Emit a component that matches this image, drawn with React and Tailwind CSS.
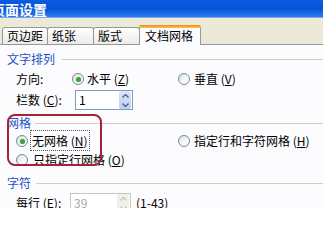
import React from "react";

const font = { fontFamily: '"Noto Sans CJK SC", "Liberation Sans", sans-serif' };

function Radio({ checked }) {
  return (
    <span className="relative inline-flex w-[12px] h-[12px] shrink-0 rounded-full border border-[#6F8AA6] bg-gradient-to-br from-[#D9DDE0] via-[#F4F5F5] to-white items-center justify-center">
      {checked && <span className="w-[5px] h-[5px] rounded-full bg-[#3DA33D] shadow-[0_0_1px_#7fd07f]" />}
    </span>
  );
}

function M({ children }) {
  return <span className="underline underline-offset-[1px]">{children}</span>;
}

function Spinner({ disabled }) {
  const c = disabled ? "#C9C7BA" : "#4D6185";
  return (
    <div className={`flex flex-col w-[12px] h-[18px] mr-[1px] ${disabled ? "bg-[#F0EFEA]" : "bg-gradient-to-b from-[#DCE6FB] to-[#B9CCF5]"} rounded-[2px]`}>
      <div className="flex-1 flex items-center justify-center">
        <svg width="7" height="4" viewBox="0 0 7 4"><path d="M0.5 3.5 L3.5 0.5 L6.5 3.5" fill="none" stroke={c} strokeWidth="1.4" /></svg>
      </div>
      <div className="flex-1 flex items-center justify-center">
        <svg width="7" height="4" viewBox="0 0 7 4"><path d="M0.5 0.5 L3.5 3.5 L6.5 0.5" fill="none" stroke={c} strokeWidth="1.4" /></svg>
      </div>
    </div>
  );
}

function Section({ title, lineFrom }) {
  return (
    <div className="flex items-center h-[14px]">
      <span className="pl-[7px] text-[#1D4FC6] text-[12px] leading-none whitespace-nowrap">{title}</span>
      <div className="flex-1 h-px bg-[#D0D0BF]" style={{ marginLeft: lineFrom }} />
    </div>
  );
}

export default function App() {
  return (
    <div className="relative w-[323px] h-[208px] overflow-hidden bg-[#ECE9D8] text-black text-[12px] leading-none" style={font}>
      {/* title bar */}
      <div className="h-[18px] bg-gradient-to-b from-[#0B5CE0] via-[#0553D8] to-[#2C7BEA] flex items-center border-b border-[#7DA6E8]">
        <span className="ml-[-9px] text-white font-bold text-[14px] tracking-[0px] whitespace-nowrap">页面设置</span>
      </div>
      {/* tab strip */}
      <div className="h-[26px] flex items-end pl-[2px]">
        {["页边距", "纸张", "版式"].map((t, i) => (
          <div key={t} className={`h-[17px] ${i === 0 ? "w-[46px]" : "w-[47px]"} ${i === 0 ? "" : "-ml-px"} border border-b-0 border-[#919B9C] rounded-t-[3px] bg-gradient-to-b from-white to-[#ECEBE6] flex items-center pl-[4px] text-[12px]`}>
            {t}
          </div>
        ))}
        <div className="relative z-10 -mb-px h-[20px] w-[62px] -ml-px border border-b-0 border-[#919B9C] rounded-t-[3px] bg-[#FCFCFE] flex items-center pl-[5px] text-[12px] pt-[1px]">
          <div className="absolute -top-px -left-px -right-px h-[3px] rounded-t-[3px] bg-gradient-to-b from-[#E68B2C] to-[#FFC73C]" />
          文档网格
        </div>
      </div>
      {/* content */}
      <div className="h-[200px] bg-[#FCFCFE] border-t border-[#919B9C] pt-[7px]">
        <Section title="文字排列" lineFrom="7px" />
        <div className="mt-[5px] h-[16px] flex items-center pl-[16px]">
          <span className="w-[56px]">方向:</span>
          <Radio checked />
          <span className="ml-[3px] w-[91px]">水平 (<M>Z</M>)</span>
          <Radio />
          <span className="ml-[4px]">垂直 (<M>V</M>)</span>
        </div>
        <div className="mt-[3px] h-[20px] flex items-center pl-[16px]">
          <span className="w-[59px] whitespace-nowrap">栏数 (<M>C</M>):</span>
          <div className="w-[58px] h-[20px] border border-[#7F9DB9] bg-white flex items-center justify-between pl-[3px]">
            <span>1</span>
            <Spinner />
          </div>
        </div>
        <div className="mt-[6px]">
          <Section title="网格" lineFrom="4px" />
        </div>
        <div className="mt-[3px] h-[16px] flex items-center pl-[16px]">
          <Radio checked />
          <span className="ml-[2px] w-[148px]">
            <span className="border border-dotted border-[#555] px-[1px] py-[1px]">无网格 (<M>N</M>)</span>
          </span>
          <Radio />
          <span className="ml-[4px] whitespace-nowrap">指定行和字符网格 (<M>H</M>)</span>
        </div>
        <div className="mt-[3px] h-[16px] flex items-center pl-[16px]">
          <Radio />
          <span className="ml-[5px] whitespace-nowrap">只指定行网格 (<M>O</M>)</span>
        </div>
        <div className="mt-[8px]">
          <Section title="字符" lineFrom="5px" />
        </div>
        <div className="mt-[3px] h-[20px] flex items-center pl-[16px]">
          <span className="w-[54px] whitespace-nowrap">每行 (<M>E</M>):</span>
          <div className="w-[61px] h-[20px] border border-[#C9C7BA] bg-white flex items-center justify-between pl-[3px]">
            <span className="text-[#ACA899]">39</span>
            <Spinner disabled />
          </div>
          <span className="ml-[5px] whitespace-nowrap">(1-43)</span>
        </div>
      </div>
      {/* red highlight */}
      <div className="absolute left-[7px] top-[114px] w-[95px] h-[52px] border-2 border-[#A42339] rounded-[8px] pointer-events-none" />
    </div>
  );
}
